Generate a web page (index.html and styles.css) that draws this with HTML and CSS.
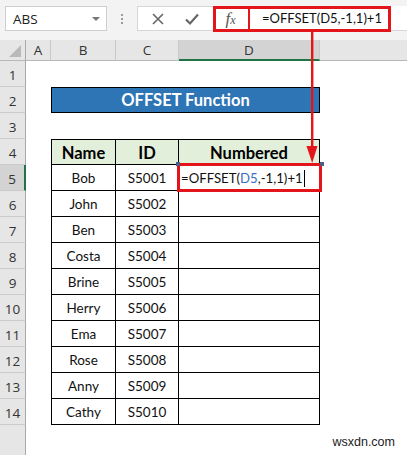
FILE: index.html
```html
<!DOCTYPE html>
<html>
<head>
<meta charset="utf-8">
<link rel="stylesheet" href="styles.css">
</head>
<body>
<div class="page">
  <div class="toolbar">
    <div class="namebox"><span>ABS</span><span class="dd"></span></div>
    <div class="grip"><i></i><i></i><i></i></div>
    <div class="btns">
      <svg class="ico" width="14" height="14" viewBox="0 0 14 14"><path d="M2 2L12 12M12 2L2 12" stroke="#666" stroke-width="1.6" fill="none"/></svg>
      <svg class="ico" width="16" height="14" viewBox="0 0 16 14"><path d="M2 7.5L6 11.5L14 2.5" stroke="#666" stroke-width="2.2" fill="none"/></svg>
    </div>
    <div class="fx"><span class="f">f</span><span class="x">x</span></div>
    <div class="formula">=OFFSET(D5,-1,1)+1</div>
  </div>
  <div class="sheet">
    <div class="ch corner"><span class="tri"></span></div>
    <div class="ch">A</div>
    <div class="ch">B</div>
    <div class="ch">C</div>
    <div class="ch sel">D</div>
    <div class="ch last"></div>

    <div class="rh">1</div><div></div><div></div><div></div><div></div><div></div>

    <div class="rh">2</div><div></div>
    <div class="title">OFFSET Function</div>
    <div></div>

    <div class="rh">3</div><div></div><div></div><div></div><div></div><div></div>

    <div class="rh">4</div><div></div>
    <div class="c hd first top">Name</div><div class="c hd top">ID</div><div class="c hd top">Numbered</div><div></div>

    <div class="rh rsel">5</div><div></div>
    <div class="c first">Bob</div><div class="c">S5001</div>
    <div class="c edit">=OFFSET(<span class="ref">D5</span>,-1,1)+1<span class="caret"></span></div><div></div>

    <div class="rh">6</div><div></div><div class="c first">John</div><div class="c">S5002</div><div class="c"></div><div></div>
    <div class="rh">7</div><div></div><div class="c first">Ben</div><div class="c">S5003</div><div class="c"></div><div></div>
    <div class="rh">8</div><div></div><div class="c first">Costa</div><div class="c">S5004</div><div class="c"></div><div></div>
    <div class="rh">9</div><div></div><div class="c first">Brine</div><div class="c">S5005</div><div class="c"></div><div></div>
    <div class="rh">10</div><div></div><div class="c first">Herry</div><div class="c">S5006</div><div class="c"></div><div></div>
    <div class="rh">11</div><div></div><div class="c first">Ema</div><div class="c">S5007</div><div class="c"></div><div></div>
    <div class="rh">12</div><div></div><div class="c first">Rose</div><div class="c">S5008</div><div class="c"></div><div></div>
    <div class="rh">13</div><div></div><div class="c first">Anny</div><div class="c">S5009</div><div class="c"></div><div></div>
    <div class="rh">14</div><div></div><div class="c first">Cathy</div><div class="c">S5010</div><div class="c"></div><div></div>

    <div class="rh end"></div><div></div><div></div><div></div><div></div><div class="wm">wsxdn.com</div>
  </div>

  <div class="mark mark-bar"></div>
  <div class="mark-div"></div>
  <div class="mark mark-cell"></div>
  <span class="handle h1"></span><span class="handle h2"></span>
  <svg class="arrow" width="14" height="134" viewBox="0 0 14 134">
    <rect x="6" y="0" width="2.4" height="120" fill="#e3151b"/>
    <path d="M1.5 116 L12.5 116 L7.2 133 Z" fill="#e3151b"/>
  </svg>
</div>
</body>
</html>
```
FILE: styles.css
```css
* { box-sizing: border-box; }
html, body { margin: 0; padding: 0; }
body {
  width: 407px;
  height: 455px;
  overflow: hidden;
  background: #fff;
  font-family: Lato, "Open Sans", sans-serif;
  color: #000;
}
.page { position: relative; width: 407px; height: 455px; }

/* formula bar */
.toolbar {
  height: 40px;
  background: #f3f3f3;
  display: flex;
  align-items: flex-start;
  padding: 6px 0 0 5px;
}
.namebox {
  width: 102px;
  height: 25px;
  background: #fff;
  border: 1px solid #cfcfcf;
  display: flex;
  align-items: center;
  justify-content: space-between;
  padding: 0 6px 0 7px;
  font-family: "Open Sans", sans-serif;
  font-size: 13.5px;
  color: #222;
}
.dd {
  width: 0; height: 0;
  border-left: 4px solid transparent;
  border-right: 4px solid transparent;
  border-top: 4px solid #777;
}
.grip {
  width: 30px;
  height: 25px;
  display: flex;
  flex-direction: column;
  align-items: center;
  justify-content: center;
  gap: 2px;
}
.grip i { display: block; width: 2px; height: 2px; background: #9a9a9a; }
.btns {
  width: 76px;
  height: 25px;
  background: #fff;
  border: 1px solid #d6d6d6;
  border-right: none;
  display: flex;
  align-items: center;
  justify-content: space-around;
  padding: 0 4px 0 4px;
}
.fx {
  width: 35px;
  height: 25px;
  background: #fff;
  display: flex;
  align-items: center;
  justify-content: center;
  font-family: "Liberation Serif", serif;
  font-style: italic;
  color: #555;
}
.fx .f { font-size: 17px; }
.fx .x { font-size: 12px; margin-top: 4px; }
.formula {
  flex: 1;
  height: 25px;
  background: #fff;
  border-bottom: 1px solid #d6d6d6;
  padding-left: 14px;
  font-size: 13px;
  line-height: 25px;
  color: #111;
  white-space: nowrap;
}

/* sheet grid */
.sheet {
  height: 415px;
  display: grid;
  grid-template-columns: 26px 25px 65px 63px 141px 1fr;
  grid-template-rows: 21px repeat(14, 26px) 1fr;
}
.ch {
  background: #e6e6e6;
  border-right: 1px solid #c9c9c9;
  border-bottom: 1px solid #b7b7b7;
  font-family: "Open Sans", sans-serif;
  font-size: 13.5px;
  color: #333;
  display: flex;
  align-items: center;
  justify-content: center;
}
.ch.last { border-right: none; }
.ch.sel { background: #d3d3d3; border-bottom: 2px solid #217346; }
.corner { position: relative; border-right: 1px solid #a9a9a9; }
.tri {
  position: absolute;
  right: 4px; bottom: 3px;
  width: 0; height: 0;
  border-left: 12px solid transparent;
  border-bottom: 12px solid #b9b9b9;
}
.rh {
  background: #e6e6e6;
  border-right: 1px solid #a9a9a9;
  border-bottom: 1px solid #cbcbcb;
  font-family: "Open Sans", sans-serif;
  font-size: 13.5px;
  color: #333;
  display: flex;
  align-items: center;
  justify-content: center;
  padding-top: 2px;
}
.rh.rsel { background: #d3d3d3; border-right: 2px solid #217346; }
.rh.end { border-bottom: none; }

.title {
  grid-column: span 3;
  background: #2e75b6;
  border: 1px solid #000;
  color: #fff;
  font-weight: 700;
  font-size: 16.5px;
  display: flex;
  align-items: center;
  justify-content: center;
}
.c {
  border-right: 1px solid #000;
  border-bottom: 1px solid #000;
  display: flex;
  align-items: center;
  justify-content: center;
  font-size: 13.5px;
  color: #111;
  padding-top: 1px;
}
.c.first { border-left: 1px solid #000; }
.c.top { border-top: 1px solid #000; }
.c.hd {
  background: #e2efda;
  font-weight: 700;
  font-size: 16.5px;
  color: #000;
}
.c.edit {
  justify-content: flex-start;
  padding-left: 2px;
  font-size: 13.2px;
  white-space: nowrap;
}
.ref { color: #3a6ec2; }
.caret { display: inline-block; width: 1px; height: 17px; background: #000; margin-left: 1px; }
.wm {
  align-self: start;
  justify-self: end;
  margin: 10px 12px 0 0;
  font-family: "Liberation Sans", Arial, sans-serif;
  font-size: 12.5px;
  line-height: 14px;
  color: #222;
}

/* red annotations (overlay) */
.mark { position: absolute; border: 3px solid #e3151b; }
.mark-bar { left: 213px; top: 6px; width: 178px; height: 26px; }
.mark-div { position: absolute; left: 248px; top: 6px; width: 2px; height: 26px; background: #e3151b; }
.mark-cell { left: 177px; top: 163px; width: 145px; height: 29px; }
.handle { position: absolute; width: 4px; height: 4px; background: #4f5d85; }
.h1 { left: 176px; top: 162px; }
.h2 { left: 320px; top: 162px; }
.arrow { position: absolute; left: 305px; top: 30px; }
```
